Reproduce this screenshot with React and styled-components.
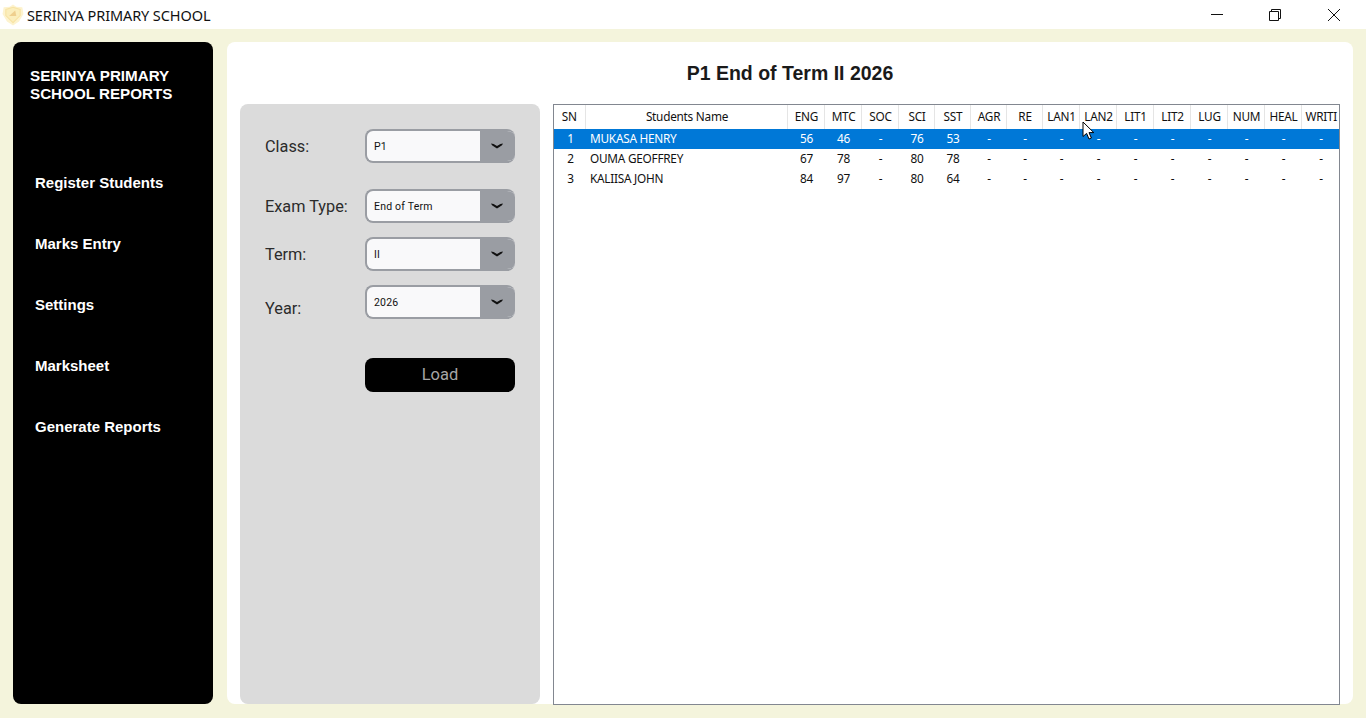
import React from 'react'
import styled, { createGlobalStyle } from 'styled-components'

const subjects = ['ENG', 'MTC', 'SOC', 'SCI', 'SST', 'AGR', 'RE', 'LAN1', 'LAN2', 'LIT1', 'LIT2', 'LUG', 'NUM', 'HEAL', 'WRITI']
const subjectWidths = [37, 37, 37, 36, 36, 36, 36, 37, 37, 37, 37, 37, 37, 37, 38]

const students = [
  { sn: 1, name: 'MUKASA HENRY', marks: [56, 46, '-', 76, 53] },
  { sn: 2, name: 'OUMA GEOFFREY', marks: [67, 78, '-', 80, 78] },
  { sn: 3, name: 'KALIISA JOHN', marks: [84, 97, '-', 80, 64] },
]

const navItems = ['Register Students', 'Marks Entry', 'Settings', 'Marksheet', 'Generate Reports']

function Chevron() {
  return (
    <svg width="12" height="6" viewBox="0 0 12 6">
      <path d="M0 0.6 L2.6 1 L6 3 L9.4 1 L12 0.6 L11 2.2 L8 4.2 L6 5.4 L4 4.2 L1 2.2 Z" fill="#111" />
    </svg>
  )
}

function Dropdown({ label, value, top, labelDrop }) {
  return (
    <FormRow top={top}>
      <FieldLabel drop={labelDrop}>{label}</FieldLabel>
      <SelectBox>
        <SelectValue>{value}</SelectValue>
        <SelectArrow><Chevron /></SelectArrow>
      </SelectBox>
    </FormRow>
  )
}

export default function App() {
  return (
    <>
      <GlobalStyle />
      <Page>
        <TitleBar>
          <AppTitle>
            <svg width="22" height="22" viewBox="0 0 20 20">
              <path d="M10 0.5 L13 2.5 L18.5 3 L19.5 9 L15.5 16 L10 19.5 L4.5 16 L0.5 9 L1.5 3 L7 2.5 Z" fill="#fdf3cf" />
              <path d="M10 3 L16.5 5 L16.5 10.5 L10 17 L3.5 10.5 L3.5 5 Z" fill="#fbeebc" stroke="#f7e3a4" strokeWidth="1" />
              <path d="M6.5 11 L12 6 L13 11 Z" fill="#efcf8e" />
            </svg>
            SERINYA PRIMARY SCHOOL
          </AppTitle>
          <WindowControls>
            <WindowButton>
              <svg width="14" height="14" viewBox="0 0 14 14">
                <path d="M1 6.5 H13" stroke="#111" strokeWidth="1" fill="none" />
              </svg>
            </WindowButton>
            <WindowButton>
              <svg width="14" height="14" viewBox="0 0 14 14">
                <path d="M1.5 3.5 H10.5 V12.5 H1.5 Z M3.5 3.5 V1.5 H12.5 V10.5 H10.5" stroke="#111" strokeWidth="1" fill="none" />
              </svg>
            </WindowButton>
            <WindowButton>
              <svg width="14" height="14" viewBox="0 0 14 14">
                <path d="M1 1 L13 13 M13 1 L1 13" stroke="#111" strokeWidth="1" fill="none" />
              </svg>
            </WindowButton>
          </WindowControls>
        </TitleBar>

        <Body>
          <Sidebar>
            <Brand>SERINYA PRIMARY<br />SCHOOL REPORTS</Brand>
            <Nav>
              {navItems.map(item => <NavItem key={item}>{item}</NavItem>)}
            </Nav>
          </Sidebar>

          <Main>
            <Heading>P1 End of Term II 2026</Heading>
            <Content>
              <FilterPanel>
                <Dropdown label="Class:" value="P1" top={25} />
                <Dropdown label="Exam Type:" value="End of Term" top={26} />
                <Dropdown label="Term:" value="II" top={14} />
                <Dropdown label="Year:" value="2026" top={14} labelDrop={6} />
                <LoadButton>Load</LoadButton>
              </FilterPanel>

              <TableFrame>
                <MarksTable>
                  <colgroup>
                    <col style={{ width: 31 }} />
                    <col style={{ width: 202 }} />
                    {subjects.map((s, i) => <col key={s} style={{ width: subjectWidths[i] }} />)}
                  </colgroup>
                  <thead>
                    <tr>
                      <HeadCell>SN</HeadCell>
                      <HeadCell>Students Name</HeadCell>
                      {subjects.map(s => <HeadCell key={s}>{s}</HeadCell>)}
                    </tr>
                  </thead>
                  <tbody>
                    {students.map((st, i) => (
                      <StudentRow key={st.sn} selected={i === 0}>
                        <Cell>{st.sn}</Cell>
                        <NameCell>{st.name}</NameCell>
                        {subjects.map((s, j) => (
                          <Cell key={s}>{j < st.marks.length ? st.marks[j] : '-'}</Cell>
                        ))}
                      </StudentRow>
                    ))}
                  </tbody>
                </MarksTable>
                <Pointer width="13" height="19" viewBox="0 0 13 19">
                  <path d="M1 1 V15.5 L4.6 12.4 L7 18 L9.4 17 L7 11.6 H11.8 Z" fill="#fff" stroke="#000" strokeWidth="1" />
                </Pointer>
              </TableFrame>
            </Content>
          </Main>
        </Body>
      </Page>
    </>
  )
}

const GlobalStyle = createGlobalStyle`
  html, body {
    margin: 0;
    padding: 0;
    overflow: hidden;
  }
  * {
    box-sizing: border-box;
  }
`

const Page = styled.div`
  width: 1366px;
  height: 718px;
  display: flex;
  flex-direction: column;
  background: #f4f4dc;
`

const TitleBar = styled.div`
  height: 29px;
  flex: none;
  display: flex;
  justify-content: space-between;
  background: #fff;
`

const AppTitle = styled.div`
  display: flex;
  align-items: center;
  gap: 3px;
  padding-left: 2px;
  font-family: "Noto Sans", sans-serif;
  font-size: 14.5px;
  letter-spacing: -0.1px;
  color: #111;
`

const WindowControls = styled.div`
  display: flex;
  padding-right: 3px;
`

const WindowButton = styled.div`
  width: 58.5px;
  display: flex;
  align-items: center;
  justify-content: center;
`

const Body = styled.div`
  flex: 1;
  display: flex;
  gap: 14px;
  padding: 13px 13px 14px 13px;
  min-height: 0;
`

const Sidebar = styled.aside`
  width: 200px;
  flex: none;
  background: #000;
  border-radius: 8px;
  color: #fff;
  font-family: "Liberation Sans", Arial, sans-serif;
  font-weight: bold;
`

const Brand = styled.div`
  padding: 25px 0 0 17px;
  font-size: 15.2px;
  line-height: 18px;
`

const Nav = styled.nav`
  display: flex;
  flex-direction: column;
  gap: 41px;
  padding: 70px 0 0 22px;
`

const NavItem = styled.div`
  height: 20px;
  line-height: 20px;
  font-size: 15px;
`

const Main = styled.main`
  flex: 1;
  display: flex;
  flex-direction: column;
  background: #fff;
  border-radius: 8px;
  min-width: 0;
`

const Heading = styled.h1`
  margin: 0;
  height: 62px;
  flex: none;
  display: flex;
  align-items: center;
  justify-content: center;
  padding-top: 1px;
  font-family: "Liberation Sans", Arial, sans-serif;
  font-size: 19.5px;
  font-weight: bold;
  color: #1a1a1a;
`

const Content = styled.div`
  flex: 1;
  display: flex;
  gap: 13px;
  padding: 0 13px;
  min-height: 0;
`

const FilterPanel = styled.section`
  width: 300px;
  flex: none;
  display: flex;
  flex-direction: column;
  background: #dbdbdb;
  border-radius: 8px;
  padding: 0 25px;
`

const FormRow = styled.div`
  display: flex;
  align-items: center;
  justify-content: space-between;
  margin-top: ${props => props.top}px;
`

const FieldLabel = styled.label`
  font-family: Roboto, sans-serif;
  font-size: 16.3px;
  color: #2b2b2b;
  padding-top: ${props => (props.drop ? props.drop * 2 : 0)}px;
`

const SelectBox = styled.div`
  width: 150px;
  height: 34px;
  display: flex;
  border: 2px solid #9a9da3;
  border-right: none;
  border-radius: 8px;
  background: #f9f9fa;
  overflow: hidden;
`

const SelectValue = styled.div`
  flex: 1;
  display: flex;
  align-items: center;
  padding-left: 7px;
  font-family: Roboto, sans-serif;
  font-size: 10.5px;
  letter-spacing: 0.2px;
  color: #111;
`

const SelectArrow = styled.div`
  width: 35px;
  display: flex;
  align-items: center;
  justify-content: center;
  padding-right: 2px;
  background: #9a9da3;
`

const LoadButton = styled.button`
  align-self: flex-end;
  width: 150px;
  height: 34px;
  margin-top: 39px;
  padding: 0 0 2px;
  border: none;
  border-radius: 8px;
  background: #000;
  color: #a6a6a6;
  font-family: Roboto, sans-serif;
  font-size: 16.5px;
`

const TableFrame = styled.div`
  position: relative;
  width: 787px;
  margin-bottom: -1px;
  border: 1px solid #828790;
  background: #fff;
`

const MarksTable = styled.table`
  width: 785px;
  table-layout: fixed;
  border-collapse: collapse;
  font-family: "Noto Sans", sans-serif;
  font-size: 11.8px;
  letter-spacing: -0.25px;
`

const HeadCell = styled.th`
  height: 24px;
  padding: 0 0 2px 2px;
  font-weight: normal;
  text-align: center;
  color: #111;
  white-space: nowrap;
  overflow: hidden;
  border-right: 1px solid #e5e5e5;
  border-bottom: none;

  &:first-child {
    padding-left: 0;
  }

  &:last-child {
    border-right: none;
  }
`

const StudentRow = styled.tr`
  height: 20px;
  background: ${props => (props.selected ? '#0078d7' : 'transparent')};
  color: ${props => (props.selected ? '#fff' : '#111')};
`

const Cell = styled.td`
  padding: 0 0 2px 2px;
  text-align: center;
  white-space: nowrap;
`

const NameCell = styled(Cell)`
  text-align: left;
  padding-left: 5px;
`

const Pointer = styled.svg`
  position: absolute;
  left: 528px;
  top: 16px;
`
